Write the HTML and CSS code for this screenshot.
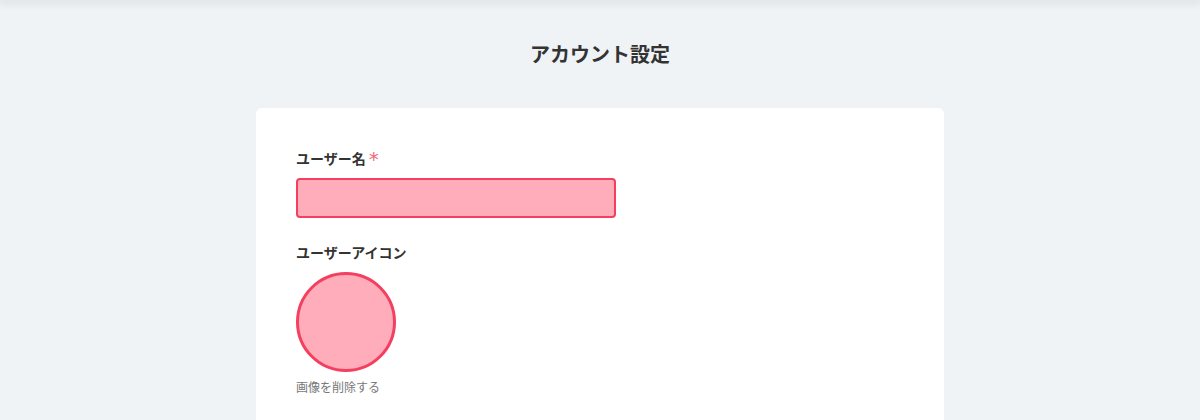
FILE: index.html
```html
<!DOCTYPE html>
<html lang="ja">
<head>
 <meta charset="UTF-8">
 <meta name="viewport" content="width=device-width, initial-scale=1.0">
 <title>アカウント設定</title>
 <link rel="stylesheet" href="styles.css">
</head>
<body>
 <div class="topbar"></div>
 <main class="page">
 <h1 class="page-title">アカウント設定</h1>
 <section class="card">
 <div class="field">
 <label class="field-label">ユーザー名<span class="required">*</span></label>
 <input class="text-input is-error" type="text">
 </div>
 <div class="field">
 <label class="field-label">ユーザーアイコン</label>
 <div class="avatar is-error"></div>
 <a class="remove-link">画像を削除する</a>
 </div>
 </section>
 </main>
</body>
</html>
```
FILE: styles.css
```css
* {
margin: 0;
padding: 0;
box-sizing: border-box;
}

body {
background: #f0f3f6;
font-family: "Noto Sans CJK JP", "Noto Sans", sans-serif;
color: #333333;
overflow: hidden;
}

.topbar {
height: 0;
box-shadow: 0 0 10px 2px rgba(0, 0, 0, 0.14);
}

.page {
display: flex;
flex-direction: column;
align-items: center;
}

.page-title {
font-size: 20px;
font-weight: 700;
line-height: 28px;
margin-top: 40px;
color: #333333;
}

.card {
width: 688px;
margin-top: 40px;
background: #ffffff;
border-radius: 6px;
padding: 40px 40px 40px;
}

.field {
display: flex;
flex-direction: column;
align-items: flex-start;
margin-bottom: 24px;
}

.field-label {
font-size: 14px;
font-weight: 700;
line-height: 20px;
margin-bottom: 10px;
display: flex;
align-items: center;
}

.required {
color: #f06a78;
font-family: "DejaVu Sans", sans-serif;
font-weight: 400;
font-size: 20px;
margin-left: 3px;
line-height: 16px;
position: relative;
top: 1px;
}

.text-input {
width: 320px;
height: 40px;
border-radius: 4px;
border: 2px solid #dddddd;
outline: none;
}

.text-input.is-error {
background: #ffadba;
border-color: #f43f5e;
}

.avatar {
width: 100px;
height: 100px;
border-radius: 50%;
border: 3px solid #dddddd;
}

.avatar.is-error {
background: #ffadba;
border-color: #f43f5e;
}

.remove-link {
font-size: 12px;
color: #777777;
margin-top: 7px;
line-height: 16px;
}
```
